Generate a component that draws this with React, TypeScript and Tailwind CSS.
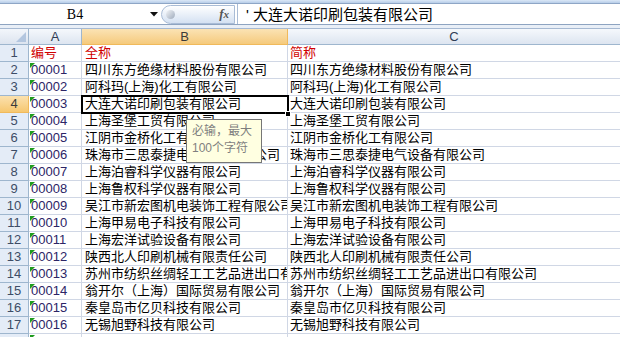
import React from 'react';

const rows: [string, string][] = [
  ['00001', '四川东方绝缘材料股份有限公司'],
  ['00002', '阿科玛(上海)化工有限公司'],
  ['00003', '大连大诺印刷包装有限公司'],
  ['00004', '上海圣堡工贸有限公司'],
  ['00005', '江阴市金桥化工有限公司'],
  ['00006', '珠海市三思泰捷电气设备有限公司'],
  ['00007', '上海泊睿科学仪器有限公司'],
  ['00008', '上海鲁权科学仪器有限公司'],
  ['00009', '吴江市新宏图机电装饰工程有限公司'],
  ['00010', '上海甲易电子科技有限公司'],
  ['00011', '上海宏洋试验设备有限公司'],
  ['00012', '陕西北人印刷机械有限责任公司'],
  ['00013', '苏州市纺织丝绸轻工工艺品进出口有限公司'],
  ['00014', '翁开尔（上海）国际贸易有限公司'],
  ['00015', '秦皇岛市亿贝科技有限公司'],
  ['00016', '无锡旭野科技有限公司'],
];

function RowHead({ n, active }: { n: number | string; active?: boolean }) {
  return (
    <div
      className={`w-[29px] shrink-0 h-full flex items-center justify-center border-r border-b text-[13px] ${
        active
          ? 'bg-gradient-to-b from-[#fbe1ae] to-[#f6c76f] border-[#f0b95b] text-[#3b3b3b]'
          : 'bg-[#e4ecf7] border-[#9eb6ce] text-[#3d4c66]'
      }`}
    >
      {n}
    </div>
  );
}

function Triangle() {
  return (
    <svg className="absolute left-[1px] top-[1px]" width="5" height="5" viewBox="0 0 5 5">
      <polygon points="0,0 5,0 0,5" fill="#1f9b1f" />
    </svg>
  );
}

export default function App() {
  return (
    <div
      className="w-[620px] h-[337px] overflow-hidden bg-white relative flex flex-col"
      style={{ fontFamily: '"Liberation Sans", "Noto Sans CJK SC", sans-serif' }}
    >
      {/* top strip */}
      <div className="h-[4px] shrink-0 bg-gradient-to-b from-[#dbe8f7] to-[#b7cde8] border-b border-[#8ea6c6]" />

      {/* formula bar */}
      <div className="h-[20px] shrink-0 flex items-stretch bg-white">
        <div className="w-[161px] shrink-0 relative flex items-center">
          <span
            className="w-[150px] text-center text-[14px] text-black"
            style={{ fontFamily: '"Liberation Serif", serif' }}
          >
            B4
          </span>
          <svg className="absolute left-[150px] top-[8px]" width="8" height="5" viewBox="0 0 8 5">
            <polygon points="0,0 8,0 4,4.5" fill="#111" />
          </svg>
        </div>
        <div className="w-[76px] shrink-0 flex items-center">
          <div className="relative w-[74px] h-[19px] rounded-l-full bg-gradient-to-b from-[#ffffff] to-[#d4e1f2] border border-[#a9bcd6] flex items-center justify-end pr-[5px]">
            <div className="absolute left-[4px] top-[4px] w-[9px] h-[9px] rounded-full bg-gradient-to-br from-[#f4f6f9] to-[#9eaabb]" />
            <span
              className="italic text-[13px] font-bold text-[#555]"
              style={{ fontFamily: '"Liberation Serif", serif' }}
            >
              f<span className="text-[11px]">x</span>
            </span>
          </div>
        </div>
        <div className="flex-1 border-l border-[#a9bcd6] flex items-center pl-[8px] text-[15px] text-black leading-none">
          ' 大连大诺印刷包装有限公司
        </div>
      </div>

      {/* gap strip */}
      <div className="h-[4px] shrink-0 bg-[#e9eff7] border-t border-[#8ea4c1]" />

      {/* column header */}
      <div className="h-[17px] shrink-0 flex border-t border-[#a6b9d2]">
        <div className="w-[29px] shrink-0 h-full relative bg-gradient-to-b from-[#f3f6fb] to-[#dce4ef] border-r border-b border-[#9eb6ce]">
          <svg className="absolute right-[2px] bottom-[2px]" width="10" height="10" viewBox="0 0 10 10">
            <polygon points="10,0 10,10 0,10" fill="#b3c6df" />
          </svg>
        </div>
        <div className="w-[53px] shrink-0 h-full flex items-center justify-center text-[13px] text-[#2f3d55] bg-gradient-to-b from-[#f5f8fc] to-[#dde5f0] border-r border-b border-[#9eb6ce]">
          A
        </div>
        <div className="w-[206px] shrink-0 h-full flex items-center justify-center text-[13px] text-[#3a3a3a] bg-gradient-to-b from-[#fbe3b4] to-[#f5ca7c] border-r border-b border-[#f0b95b]">
          B
        </div>
        <div className="flex-1 h-full flex items-center justify-center text-[13px] text-[#2f3d55] bg-gradient-to-b from-[#f5f8fc] to-[#dde5f0] border-b border-[#9eb6ce]">
          C
        </div>
      </div>

      {/* row 1 */}
      <div className="h-[17px] shrink-0 flex">
        <RowHead n={1} />
        <div className="w-[53px] shrink-0 border-r border-b border-[#d0d7e5] pl-[2px] text-[13px] leading-[16px] text-[#d00000]">编号</div>
        <div className="w-[206px] shrink-0 border-r border-b border-[#d0d7e5] pl-[3px] text-[13px] leading-[16px] text-[#d00000]">全称</div>
        <div className="flex-1 border-b border-[#d0d7e5] pl-[2px] text-[13px] leading-[16px] text-[#d00000]">简称</div>
      </div>

      {rows.map(([code, name], i) => {
        const active = i === 2;
        return (
          <div key={code} className="h-[17px] shrink-0 flex">
            <RowHead n={i + 2} active={active} />
            <div className="relative w-[53px] shrink-0 border-r border-b border-[#d0d7e5] pl-[2px] text-[13px] leading-[16px] text-[#2c2466]">
              <Triangle />
              {code}
            </div>
            <div className="relative w-[206px] shrink-0 border-r border-b border-[#d0d7e5] pl-[3px] text-[13px] leading-[16px] text-black whitespace-nowrap overflow-hidden">
              {name}
            </div>
            <div className="relative flex-1 border-b border-[#d0d7e5] pl-[2px] text-[13px] leading-[16px] text-black whitespace-nowrap overflow-hidden">
              {name}
            </div>
          </div>
        );
      })}

      {/* row 18 partial */}
      <div className="h-[17px] shrink-0 flex">
        <RowHead n={18} />
        <div className="relative w-[53px] shrink-0 border-r border-[#d0d7e5]">
          <Triangle />
        </div>
        <div className="w-[206px] shrink-0 border-r border-[#d0d7e5]" />
        <div className="flex-1" />
      </div>

      {/* selected cell B4 */}
      <div className="absolute left-[81px] top-[95px] w-[208px] h-[19px] border-2 border-black pointer-events-none" />
      <div className="absolute left-[285px] top-[111px] w-[6px] h-[6px] bg-black border border-white" />

      {/* input message */}
      <div className="absolute left-[186px] top-[119px] w-[76px] h-[44px] bg-[#ffffe1] border border-[#767676] px-[5px] pt-[3px] text-[12px] leading-[17px] text-[#7f7f7f]">
        <div>必输，最大</div>
        <div>100个字符</div>
      </div>
    </div>
  );
}
